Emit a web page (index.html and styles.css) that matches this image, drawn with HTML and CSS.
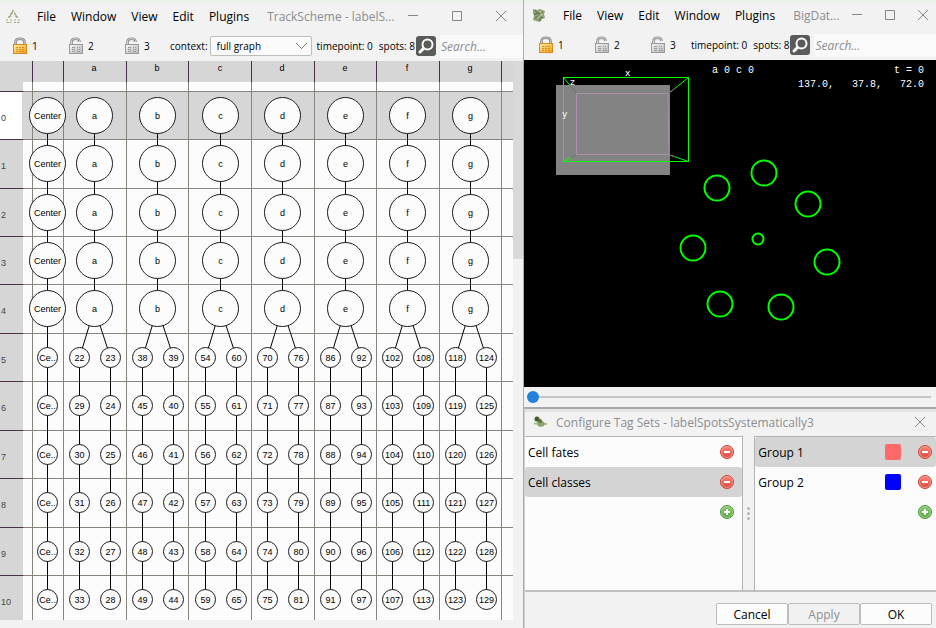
FILE: index.html
```html
<!DOCTYPE html>
<html lang="en">
<head>
<meta charset="utf-8">
<title>TrackScheme</title>
<link rel="stylesheet" href="styles.css">
</head>
<body>
<svg class="defs" width="0" height="0" aria-hidden="true">
  <defs>
    <linearGradient id="gold" x1="0" y1="0" x2="1" y2="1"><stop offset="0" stop-color="#fff0a0"/><stop offset="1" stop-color="#f09c1c"/></linearGradient>
    <linearGradient id="silver" x1="0" y1="0" x2="1" y2="1"><stop offset="0" stop-color="#f6f6f6"/><stop offset="1" stop-color="#b4b4b4"/></linearGradient>
    <linearGradient id="red" x1="0" y1="0" x2="0" y2="1"><stop offset="0" stop-color="#f58a7c"/><stop offset="1" stop-color="#e0443a"/></linearGradient>
    <linearGradient id="green" x1="0" y1="0" x2="0" y2="1"><stop offset="0" stop-color="#8fcb70"/><stop offset="1" stop-color="#54a83e"/></linearGradient>
    <symbol id="lock" viewBox="0 0 16 18">
      <path d="M3.500 9V5.500C3.500 2.800 5.200 1.700 8 1.700s4.500 1.100 4.500 3.800V9" fill="none" stroke="#8a8a8a" stroke-width="2.600"/>
      <path d="M3.500 9V5.500C3.500 2.800 5.200 1.700 8 1.700s4.500 1.100 4.500 3.800V9" fill="none" stroke="#c8c8c8" stroke-width="1"/>
      <rect x="1.500" y="7.500" width="13" height="9" fill="url(#gold)" stroke="#d88a1a"/>
      <path d="M4 10.500h8M4 12.500h8M4 14.500h8" stroke="#d88a1a" stroke-dasharray="2 1"/>
    </symbol>
    <symbol id="unlock" viewBox="0 0 16 18">
      <path d="M3.500 8V5C3.500 2.600 4.800 1.700 7.500 1.700s4 .9 4 3.300" fill="none" stroke="#8f8f8f" stroke-width="2.600"/>
      <path d="M3.500 8V5C3.500 2.600 4.800 1.700 7.500 1.700s4 .9 4 3.300" fill="none" stroke="#d6d6d6" stroke-width="1"/>
      <rect x="1.500" y="7.500" width="13" height="9" fill="url(#silver)" stroke="#9a9a9a"/>
      <path d="M4 10.500h3M4 12.500h3M4 14.500h3M9 10.500h1M11 10.500h1M9 12.500h1M11 12.500h1M9 14.500h3" stroke="#999"/>
    </symbol>
    <symbol id="search" viewBox="0 0 20 20">
      <rect width="20" height="20" rx="3" fill="#585b58"/>
      <circle cx="11.500" cy="8.500" r="5" fill="none" stroke="#fff" stroke-width="2"/>
      <path d="M7.500 12.500L4 16" stroke="#fff" stroke-width="3" stroke-linecap="round"/>
    </symbol>
    <symbol id="remove" viewBox="0 0 16 16">
      <circle cx="8" cy="8" r="6.500" fill="url(#red)" stroke="#c8433a"/>
      <circle cx="8" cy="8" r="5.500" fill="none" stroke="#f7aaa0" stroke-width=".7"/>
      <rect x="5" y="7" width="6" height="2" fill="#fff"/>
    </symbol>
    <symbol id="add" viewBox="0 0 16 16">
      <circle cx="8" cy="8" r="6.500" fill="url(#green)" stroke="#45913a"/>
      <circle cx="8" cy="8" r="5.500" fill="none" stroke="#b4dfa0" stroke-width=".7"/>
      <path d="M5 8h6M8 5v6" stroke="#fff" stroke-width="2"/>
    </symbol>
    <symbol id="minimize" viewBox="0 0 12 12"><path d="M1 5.500h10" stroke="#858585"/></symbol>
    <symbol id="maximize" viewBox="0 0 12 12"><path d="M1.500 1.500h9v9h-9z" fill="none" stroke="#858585"/></symbol>
    <symbol id="close" viewBox="0 0 12 12"><path d="M1 1l10 10M11 1L1 11" stroke="#858585" fill="none"/></symbol>
  </defs>
</svg>

<main class="desktop">
  <section class="window trackscheme">
    <header class="titlebar">
      <svg class="appicon" viewBox="0 0 16 16" aria-hidden="true">
        <path d="M8 2v3M6 5h4M6 5v3M10 5v3M4 8v3M6.500 8h-2.500M12 8v3M10 8h2" fill="none" stroke="#9bab80" stroke-width="1.500" stroke-dasharray="2 1"/>
        <path d="M2 11v4M6 11v4M10 11v4M14 11v4M2 14.500h4M9 14.500h5" fill="none" stroke="#9bab80" stroke-dasharray="2 1"/>
      </svg>
      <nav class="menu"><button>File</button><button>Window</button><button>View</button><button>Edit</button><button>Plugins</button></nav>
      <h1>TrackScheme - labelS...</h1>
      <div class="controls">
        <button aria-label="Minimize"><svg><use href="#minimize"/></svg></button>
        <button aria-label="Maximize"><svg><use href="#maximize"/></svg></button>
        <button aria-label="Close"><svg><use href="#close"/></svg></button>
      </div>
    </header>
    <div class="toolbar">
      <div class="locks">
        <button><svg><use href="#lock"/></svg>1</button>
        <button><svg><use href="#unlock"/></svg>2</button>
        <button><svg><use href="#unlock"/></svg>3</button>
      </div>
      <label class="context">context: <select><option>full graph</option></select></label>
      <span class="status"><span>timepoint: 0</span><span>spots: 8</span></span>
      <label class="find"><svg aria-label="Search"><use href="#search"/></svg><input type="text" placeholder="Search..."></label>
    </div>
    <div class="graph">
      <svg id="scheme" viewBox="0 0 513 559" role="img" aria-label="Track scheme"></svg>
      <div class="scrollbar"><div class="scrollthumb"></div></div>
    </div>
    <div class="hscroll"></div>
  </section>

  <div class="side">
    <section class="window bdv">
      <header class="titlebar">
        <svg class="appicon" viewBox="0 0 16 16" aria-hidden="true">
          <path d="M2 2l4 1 3-1 5 2-1 3 1 4-3 1-2 3-4-1-3-1 1-4-1-3z" fill="#91a279"/>
          <path d="M4 3l3 4 5-2M4 11l4-2 4 2M3 7h3M9 11v3" fill="none" stroke="#4d6b37"/>
          <path d="M9 4l2 4-5 3" fill="none" stroke="#c4cfb4"/>
        </svg>
        <nav class="menu"><button>File</button><button>View</button><button>Edit</button><button>Window</button><button>Plugins</button></nav>
        <h1>BigDat...</h1>
        <div class="controls">
          <button aria-label="Minimize"><svg><use href="#minimize"/></svg></button>
          <button aria-label="Maximize"><svg><use href="#maximize"/></svg></button>
          <button aria-label="Close"><svg><use href="#close"/></svg></button>
        </div>
      </header>
      <div class="toolbar">
        <div class="locks">
          <button><svg><use href="#lock"/></svg>1</button>
          <button><svg><use href="#unlock"/></svg>2</button>
          <button><svg><use href="#unlock"/></svg>3</button>
        </div>
        <span class="status"><span>timepoint: 0</span><span>spots: 8</span></span>
        <label class="find"><svg aria-label="Search"><use href="#search"/></svg><input type="text" placeholder="Search..."></label>
      </div>
      <svg class="viewer" viewBox="0 0 412 327" role="img" aria-label="Volume viewer">
        <rect width="412" height="327" fill="#000"/>
        <rect x="32" y="25" width="114" height="90" fill="#838383"/>
        <g fill="none">
          <path d="M39.500 17.500l13 16M164.500 17.500l-20 16M39.500 101.500l13-7M164.500 101.500l-20-7" stroke="#00ff00"/>
          <path d="M46 25.500l6.500 8M151.500 28l-7.500 5.500M47 97.500l5.500-3M151.500 97l-7.500-2.500" stroke="#8c4f8c"/>
          <path d="M52.500 33.500h91.500l1 61h-92.500z" stroke="#ad8fad"/>
          <rect x="39.500" y="17.500" width="125" height="84" stroke="#00ff00"/>
        </g>
        <g class="axes"><text x="101" y="16">x</text><text x="46" y="25">z</text><text x="38" y="57">y</text></g>
        <g class="readout">
          <text x="188" y="13">a 0 c 0</text><text x="370" y="13">t = 0</text>
          <text x="274" y="27">137.0,   37.8,   72.0</text>
        </g>
        <g fill="none" stroke="#00ff00" stroke-width="2">
          <circle cx="193" cy="128" r="12.500"/><circle cx="240" cy="113" r="12.500"/><circle cx="284" cy="144" r="12.500"/>
          <circle cx="303" cy="202" r="12.500"/><circle cx="257" cy="247" r="12.500"/><circle cx="196" cy="244" r="12.500"/>
          <circle cx="169" cy="188" r="12.500"/><circle cx="234" cy="179" r="5.500"/>
        </g>
      </svg>
      <div class="timeline"><input type="range" min="0" max="10" value="0" aria-label="Timepoint"></div>
    </section>

    <section class="window tags">
      <header class="titlebar">
        <svg class="appicon" viewBox="0 0 16 16" aria-hidden="true">
          <path d="M5 8l4-2 4 3-1 3-4 1-3-2z" fill="#8ea36c"/><circle cx="5" cy="5" r="2.500" fill="#3f5c2a"/>
          <circle cx="8" cy="7" r="2" fill="#58743e"/><path d="M2 9.500h4M12 10h3" stroke="#a9bd8c" stroke-width="2"/>
        </svg>
        <h1>Configure Tag Sets - labelSpotsSystematically3</h1>
        <div class="controls"><button aria-label="Close"><svg><use href="#close"/></svg></button></div>
      </header>
      <div class="panes">
        <ul class="list sets">
          <li><span>Cell fates</span><button aria-label="Remove Cell fates"><svg><use href="#remove"/></svg></button></li>
          <li class="selected"><span>Cell classes</span><button aria-label="Remove Cell classes"><svg><use href="#remove"/></svg></button></li>
          <li><button aria-label="Add tag set"><svg><use href="#add"/></svg></button></li>
        </ul>
        <div class="splitter"><i></i><i></i><i></i></div>
        <ul class="list groups">
          <li class="selected"><span>Group 1</span><button class="swatch coral" aria-label="Group 1 colour"></button><button aria-label="Remove Group 1"><svg><use href="#remove"/></svg></button></li>
          <li><span>Group 2</span><button class="swatch blue" aria-label="Group 2 colour"></button><button aria-label="Remove Group 2"><svg><use href="#remove"/></svg></button></li>
          <li><button aria-label="Add tag"><svg><use href="#add"/></svg></button></li>
        </ul>
      </div>
      <footer class="actions"><button>Cancel</button><button disabled>Apply</button><button>OK</button></footer>
    </section>
  </div>
</main>
<script src="scheme.js"></script>
</body>
</html>
```
FILE: styles.css
```css
* { box-sizing: border-box; }
body {
  margin: 0;
  font-family: "Open Sans", "Noto Sans", sans-serif;
  font-size: 12px;
  color: #000;
  background: #f1f1f1;
}
button { font: inherit; color: inherit; background: none; border: 0; padding: 0; }
svg { display: block; }
.defs { position: absolute; }

.desktop { display: grid; grid-template-columns: 524fr 412fr; min-height: 100vh; }
.window { display: flex; flex-direction: column; background: #f2f2f2; min-width: 0; }
.side { display: flex; flex-direction: column; min-width: 0; }
.trackscheme { border-right: 1px solid #a9adb1; }

.titlebar { display: flex; align-items: center; height: 29px; padding-left: 5px; border-top: 3px solid #eaf2ea; }
.appicon { width: 16px; height: 16px; flex: none; }
.menu { display: flex; gap: 15px; margin-left: 16px; }
.titlebar h1 { margin: 0 0 0 18px; font-size: 12px; font-weight: 400; color: #8d8d91; white-space: nowrap; }
.controls { display: flex; gap: 32px; margin-left: auto; padding-right: 16px; }
.controls svg { width: 12px; height: 12px; }

.toolbar { display: flex; align-items: center; height: 32px; padding-top: 2px; padding-left: 12px; font-size: 10px; white-space: nowrap; }
.locks { display: flex; }
.locks button { display: flex; align-items: center; gap: 4px; width: 56px; }
.locks svg { width: 16px; height: 18px; }
.context { display: flex; align-items: center; gap: 2px; margin-left: -10px; }
.context select {
  appearance: none;
  width: 102px;
  height: 20px;
  padding: 0 6px;
  border: 1px solid #bdbdbd;
  border-radius: 2px;
  font: inherit;
  color: #000;
  background: linear-gradient(45deg, transparent 45%, #777 45% 55%, transparent 55%) right 9px center / 6px 6px no-repeat,
    linear-gradient(-45deg, transparent 45%, #777 45% 55%, transparent 55%) right 4px center / 6px 6px no-repeat, #fbfbfb;
}
.status { display: flex; gap: 6px; margin-left: 5px; }
.find { display: flex; align-items: center; gap: 4px; flex: 1; min-width: 0; margin-left: 1px; }
.find svg { width: 20px; height: 20px; flex: none; }
.find input {
  flex: 1; min-width: 0; height: 23px; padding: 0 1px; border: 0; outline: 0; background: #fafafa;
  font: italic 12px "Open Sans", sans-serif; color: #333;
}
.find input::placeholder { color: #8c8c90; }

.graph { display: flex; }
#scheme { flex: 1; min-width: 0; background: #fcfcfc; font: 9px "Liberation Sans", Arial, sans-serif; }
.head { fill: #d6d6d6; }
.current { fill: #fff; }
.grid { stroke: #85857c; }
.tick { stroke: #493047; }
.label { fill: #444; }
.edge { stroke: #000; }
.node { fill: #fcfcfc; stroke: #1c1c1c; }
.name { fill: #000; text-anchor: middle; }
.scrollbar { width: 10px; background: #f2f2f2; }
.scrollthumb { height: 198px; background: #d9d9d9; }
.hscroll { flex: 1; min-height: 8px; }

.bdv .titlebar { height: 27px; padding-left: 7px; }
.bdv .controls { gap: 21px; padding-right: 7px; }
.bdv .toolbar { height: 33px; padding-top: 3px; padding-left: 14px; }
.bdv .status { margin-left: -15px; }
.viewer { width: 100%; height: auto; }
.axes { fill: #fff; font: 9px "DejaVu Sans", sans-serif; }
.readout { fill: #fff; font: 10px "Liberation Mono", monospace; }
.readout text { white-space: pre; }
.timeline { display: flex; align-items: center; height: 20px; padding-right: 5px; padding-left: 3px; }
.timeline input { appearance: none; width: 100%; height: 12px; margin: 0; background: linear-gradient(#c4c4c4, #c4c4c4) center / 100% 2px no-repeat; }
.timeline input::-webkit-slider-thumb { appearance: none; width: 12px; height: 12px; border-radius: 50%; background: #2080dc; }

.tags { flex: 1; border-top: 2px solid #a8a8a8; border-left: 1px solid #d0d0d0; }
.tags .titlebar { height: 23px; margin-bottom: 4px; padding-left: 7px; border-top-color: #e4e4e4; }
.tags .titlebar h1 { margin-left: 8px; }
.tags .controls { padding-right: 10px; }
.panes { display: flex; flex: 1; border-bottom: 2px solid #c0c0c0; }
.list { margin: 0; padding: 0; list-style: none; background: #fcfcfc; border: 1px solid #b4b4b4; border-bottom: 0; }
.sets { flex: 219; border-left: 0; }
.groups { flex: 182; border-right: 0; }
.list li { display: flex; align-items: center; height: 30px; padding-left: 3px; }
.list span { flex: 1; }
.list .selected { background: #d4d4d4; border-radius: 3px; }
.list li > button { margin-left: auto; }
.list svg { width: 16px; height: 16px; }
.sets li { padding-right: 7px; }
.groups li { padding-right: 3px; }
.list .swatch { width: 16px; height: 16px; margin-right: 16px; border-radius: 2px; }
.coral { background: #fe6a6a; }
.blue { background: #0000fe; }
.splitter { display: flex; flex-direction: column; justify-content: center; align-items: center; gap: 2px; width: 11px; }
.splitter i { width: 3px; height: 3px; border-radius: 50%; background: #b4b4b4; }
.actions { display: flex; justify-content: flex-end; height: 36px; padding: 11px 4px 3px 0; }
.actions button { width: 72px; border: 1px solid #bdbdbd; border-radius: 2px; background: #fcfcfc; }
.actions button:disabled { color: #8f8f93; background: #f1f1f1; }
```
FILE: scheme.js
```js
const svg = document.getElementById("scheme");
const NS = "http://www.w3.org/2000/svg";
const rows = [30, 78, 127, 175, 223, 272, 320, 369, 417, 466, 514];
const columns = [32, 63, 126, 188, 251, 314, 376, 439, 501];
const tracks = [
  { name: "a", x: 94, left: [22, 29, 30, 31, 32, 33], right: [23, 24, 25, 26, 27, 28] },
  { name: "b", x: 157, left: [38, 45, 46, 47, 48, 49], right: [39, 40, 41, 42, 43, 44] },
  { name: "c", x: 220, left: [54, 55, 56, 57, 58, 59], right: [60, 61, 62, 63, 64, 65] },
  { name: "d", x: 282, left: [70, 71, 72, 73, 74, 75], right: [76, 77, 78, 79, 80, 81] },
  { name: "e", x: 345, left: [86, 87, 88, 89, 90, 91], right: [92, 93, 94, 95, 96, 97] },
  { name: "f", x: 407, left: [102, 103, 104, 105, 106, 107], right: [108, 109, 110, 111, 112, 113] },
  { name: "g", x: 470, left: [118, 119, 120, 121, 122, 123], right: [124, 125, 126, 127, 128, 129] }
];

function draw(tag, cls, attrs, text) {
  const el = document.createElementNS(NS, tag);
  el.setAttribute("class", cls);
  for (const key in attrs) el.setAttribute(key, attrs[key]);
  if (text !== undefined) el.textContent = text;
  svg.append(el);
}
const line = (cls, x1, y1, x2, y2) => draw("line", cls, { x1, y1, x2, y2 });
const rowY = i => rows[i] + 24.5;
function node(x, y, r, text) {
  draw("circle", "node", { cx: x + 0.5, cy: y, r });
  draw("text", "name", { x: x + 0.5, y: y + 3 }, text);
}

draw("rect", "head", { x: 0, y: 0, width: 513, height: 21 });
draw("rect", "head", { x: 0, y: 0, width: 23, height: 559 });
draw("rect", "head", { x: 23, y: 30, width: 490, height: 48 });
draw("rect", "current", { x: 0, y: 31, width: 22, height: 47 });
rows.forEach((y, i) => {
  line("tick", 0, y + 0.5, 23, y + 0.5);
  line("grid", 23, y + 0.5, 513, y + 0.5);
  draw("text", "label", { x: 1, y: y + 30 }, i);
});
columns.forEach(x => {
  line("tick", x + 0.5, 0, x + 0.5, 21);
  line("grid", x + 0.5, 21, x + 0.5, 559);
});

line("edge", 47.5, rowY(0), 47.5, rowY(10));
rows.forEach((y, i) => node(47, rowY(i), i < 5 ? 18 : 10, i < 5 ? "Center" : "Ce.."));

tracks.forEach(t => {
  draw("text", "label name", { x: t.x, y: 10 }, t.name);
  line("edge", t.x + 0.5, rowY(0), t.x + 0.5, rowY(4));
  [[t.left, -15], [t.right, 16]].forEach(([ids, dx]) => {
    const x = t.x + dx;
    line("edge", t.x + 0.5, rowY(4), x + 0.5, rowY(5));
    line("edge", x + 0.5, rowY(5), x + 0.5, rowY(10));
    ids.forEach((id, i) => node(x, rowY(i + 5), 10, id));
  });
  for (let i = 0; i < 5; i++) node(t.x, rowY(i), 18, t.name);
});
```
